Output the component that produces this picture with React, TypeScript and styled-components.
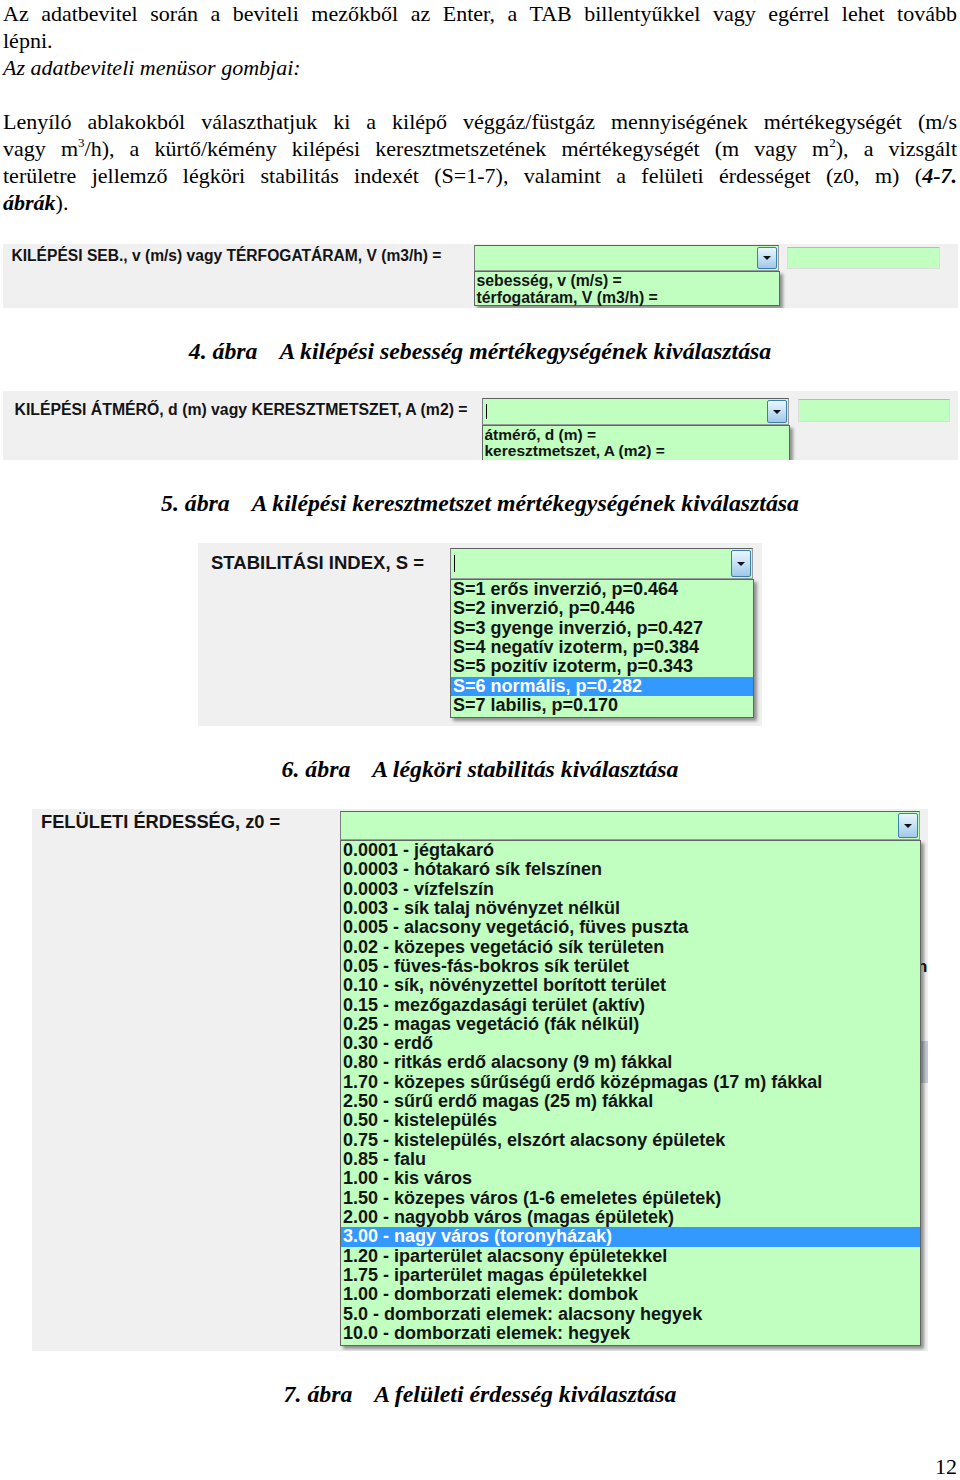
import React from "react";
import styled, { createGlobalStyle } from "styled-components";

const GREEN = "#c0ffc0";

const GlobalStyle = createGlobalStyle`
  html, body { margin: 0; padding: 0; background: #ffffff; }
  body { width: 960px; }
`;

const Page = styled.div`
  width: 960px;
  box-sizing: border-box;
  display: flex;
  flex-direction: column;
  font-family: "Liberation Serif", "Times New Roman", serif;
  color: #000;
`;

const TextBlock = styled.div`
  padding: 0 3px;
`;

const Para = styled.p<{ $italic?: boolean; $after?: number }>`
  margin: 0 0 ${(p) => p.$after ?? 0}px;
  font-size: 22px;
  line-height: 27px;
  text-align: justify;
  text-align-last: justify;
  font-style: ${(p) => (p.$italic ? "italic" : "normal")};
`;

const LastLine = styled.span`
  display: block;
  text-align: left;
  text-align-last: left;
`;

const Sup = styled.sup`
  font-size: 13px;
  line-height: 0;
  vertical-align: 9px;
`;

const Emph = styled.span`
  font-weight: 700;
  font-style: italic;
`;

const Caption = styled.div`
  margin: 30px 0 26px;
  text-align: center;
  font-family: "Liberation Serif", "Times New Roman", serif;
  font-size: 23.8px;
  line-height: 27px;
  font-weight: 700;
  font-style: italic;
  white-space: nowrap;
`;

const FigNo = styled.span`
  margin-right: 22px;
`;

const Panel = styled.div<{ $w: number; $h: number; $pad: number; $top: number }>`
  position: relative;
  align-self: center;
  flex: none;
  box-sizing: border-box;
  width: ${(p) => p.$w}px;
  height: ${(p) => p.$h}px;
  margin-top: ${(p) => p.$top}px;
  padding-left: ${(p) => p.$pad}px;
  background: #f0f0f0;
  overflow: hidden;
  display: flex;
  align-items: flex-start;
  font-family: "Liberation Sans", Arial, sans-serif;
  color: #141414;
`;

const FieldLabel = styled.div<{ $w: number; $size: number; $top: number }>`
  flex: none;
  width: ${(p) => p.$w}px;
  margin-top: ${(p) => p.$top}px;
  font-size: ${(p) => p.$size}px;
  line-height: 20px;
  font-weight: 700;
  white-space: nowrap;
`;

const ComboWrap = styled.div<{ $w: number; $top: number }>`
  position: relative;
  flex: none;
  width: ${(p) => p.$w}px;
  margin-top: ${(p) => p.$top}px;
`;

const ComboField = styled.div<{ $h: number }>`
  box-sizing: border-box;
  height: ${(p) => p.$h}px;
  display: flex;
  align-items: stretch;
  background: ${GREEN};
  border: 1px solid #9a9b9c;
  border-top-color: #5f6061;
  border-left-color: #7c7d7e;
  padding: 1px;
`;

const ComboInput = styled.div`
  flex: 1;
  display: flex;
  align-items: center;
  padding-left: 2px;
`;

const Caret = styled.span`
  width: 1px;
  height: 66%;
  background: #000;
`;

const DropButton = styled.div`
  flex: none;
  width: 20px;
  box-sizing: border-box;
  border: 1px solid #3c7fb1;
  border-radius: 2px;
  background: linear-gradient(#eaf6fd, #c4e2f7 50%, #a2c7e6);
  display: flex;
  align-items: center;
  justify-content: center;
`;

const Arrow = styled.span`
  width: 0;
  height: 0;
  border-left: 4px solid transparent;
  border-right: 4px solid transparent;
  border-top: 4px solid #111;
`;

const DropList = styled.div<{ $h?: number; $padTop: number }>`
  position: absolute;
  top: 100%;
  left: 0;
  z-index: 2;
  width: calc(100% + 1px);
  box-sizing: border-box;
  ${(p) => (p.$h ? `height: ${p.$h}px;` : "")}
  padding: ${(p) => p.$padTop}px 0 2px;
  background: ${GREEN};
  border: 1px solid #646464;
  box-shadow: 3px 3px 3px rgba(0, 0, 0, 0.4);
`;

const ListItem = styled.div<{ $size: number; $lh: number; $sel?: boolean }>`
  padding-left: 2px;
  font-size: ${(p) => p.$size}px;
  line-height: ${(p) => p.$lh}px;
  font-weight: 700;
  white-space: nowrap;
  background: ${(p) => (p.$sel ? "#3399ff" : "transparent")};
  color: ${(p) => (p.$sel ? "#ffffff" : "#141414")};
`;

const TextBox = styled.div<{ $w: number; $h: number; $top: number; $gap: number }>`
  flex: none;
  box-sizing: border-box;
  width: ${(p) => p.$w}px;
  height: ${(p) => p.$h}px;
  margin-top: ${(p) => p.$top}px;
  margin-left: ${(p) => p.$gap}px;
  background: ${GREEN};
  border: 1px solid #dcdcdc;
  border-top-color: #b8b8b8;
`;

const BehindText = styled.span<{ $x: number; $y: number }>`
  position: absolute;
  left: ${(p) => p.$x}px;
  top: ${(p) => p.$y}px;
  font-size: 17px;
  font-weight: 700;
  line-height: 20px;
  z-index: 1;
`;

const BehindBlock = styled.div<{ $x: number; $y: number; $w: number; $h: number }>`
  position: absolute;
  left: ${(p) => p.$x}px;
  top: ${(p) => p.$y}px;
  width: ${(p) => p.$w}px;
  height: ${(p) => p.$h}px;
  background: #c3c9d2;
  z-index: 1;
`;

const PageNumber = styled.div`
  margin-top: 23px;
  padding-right: 3px;
  text-align: right;
  font-size: 22px;
  line-height: 20px;
`;

type ComboProps = {
  width: number;
  top: number;
  height: number;
  caret?: boolean;
  items: string[];
  selected?: number;
  itemSize: number;
  itemLine: number;
  listHeight?: number;
  listPadTop: number;
};

function Combo({ width, top, height, caret, items, selected, itemSize, itemLine, listHeight, listPadTop }: ComboProps) {
  return (
    <ComboWrap $w={width} $top={top}>
      <ComboField $h={height}>
        <ComboInput>{caret && <Caret />}</ComboInput>
        <DropButton>
          <Arrow />
        </DropButton>
      </ComboField>
      <DropList $h={listHeight} $padTop={listPadTop}>
        {items.map((t, i) => (
          <ListItem key={i} $size={itemSize} $lh={itemLine} $sel={i === selected}>
            {t}
          </ListItem>
        ))}
      </DropList>
    </ComboWrap>
  );
}

const fig6Items = [
  "S=1 erős inverzió, p=0.464",
  "S=2 inverzió, p=0.446",
  "S=3 gyenge inverzió, p=0.427",
  "S=4 negatív izoterm, p=0.384",
  "S=5 pozitív izoterm, p=0.343",
  "S=6 normális, p=0.282",
  "S=7 labilis, p=0.170",
];

const fig7Items = [
  "0.0001 - jégtakaró",
  "0.0003 - hótakaró sík felszínen",
  "0.0003 - vízfelszín",
  "0.003 - sík talaj növényzet nélkül",
  "0.005 - alacsony vegetáció, füves puszta",
  "0.02 - közepes vegetáció sík területen",
  "0.05 - füves-fás-bokros sík terület",
  "0.10 - sík, növényzettel borított terület",
  "0.15 - mezőgazdasági terület (aktív)",
  "0.25 - magas vegetáció (fák nélkül)",
  "0.30 - erdő",
  "0.80 - ritkás erdő alacsony (9 m) fákkal",
  "1.70 - közepes sűrűségű erdő középmagas (17 m) fákkal",
  "2.50 - sűrű erdő magas (25 m) fákkal",
  "0.50 - kistelepülés",
  "0.75 - kistelepülés, elszórt alacsony épületek",
  "0.85 - falu",
  "1.00 - kis város",
  "1.50 - közepes város (1-6 emeletes épületek)",
  "2.00 - nagyobb város (magas épületek)",
  "3.00 - nagy város (toronyházak)",
  "1.20 - iparterület alacsony épületekkel",
  "1.75 - iparterület magas épületekkel",
  "1.00 - domborzati elemek: dombok",
  "5.0 - domborzati elemek: alacsony hegyek",
  "10.0 - domborzati elemek: hegyek",
];

export default function App() {
  return (
    <>
      <GlobalStyle />
      <Page>
        <TextBlock>
          <Para>
            Az adatbevitel során a beviteli mezőkből az Enter, a TAB billentyűkkel vagy egérrel lehet tovább
            <LastLine>lépni.</LastLine>
          </Para>
          <Para $italic $after={27}>
            <LastLine>Az adatbeviteli menüsor gombjai:</LastLine>
          </Para>
          <Para>
            Lenyíló ablakokból választhatjuk ki a kilépő véggáz/füstgáz mennyiségének mértékegységét (m/s
            <br />
            vagy m<Sup>3</Sup>/h), a kürtő/kémény kilépési keresztmetszetének mértékegységét (m vagy m<Sup>2</Sup>), a
            vizsgált
            <br />
            területre jellemző légköri stabilitás indexét (S=1-7), valamint a felületi érdességet (z0, m) (
            <Emph>4-7.</Emph>
            <LastLine>
              <Emph>ábrák</Emph>).
            </LastLine>
          </Para>
        </TextBlock>

        <Panel $w={955} $h={64} $pad={9} $top={28}>
          <FieldLabel $w={462} $size={15.6} $top={2}>
            KILÉPÉSI SEB., v (m/s) vagy TÉRFOGATÁRAM, V (m3/h) =
          </FieldLabel>
          <Combo
            width={305}
            top={1}
            height={26}
            items={["sebesség, v (m/s) =", "térfogatáram, V (m3/h) ="]}
            itemSize={15.8}
            itemLine={16.5}
            listHeight={35}
            listPadTop={1}
          />
          <TextBox $w={153} $h={22} $top={3} $gap={8} />
        </Panel>
        <Caption>
          <FigNo>4. ábra</FigNo>A kilépési sebesség mértékegységének kiválasztása
        </Caption>

        <Panel $w={955} $h={69} $pad={12} $top={0}>
          <FieldLabel $w={467} $size={15.8} $top={9}>
            KILÉPÉSI ÁTMÉRŐ, d (m) vagy KERESZTMETSZET, A (m2) =
          </FieldLabel>
          <Combo
            width={307}
            top={7}
            height={27}
            caret
            items={["átmérő, d (m) =", "keresztmetszet, A (m2) ="]}
            itemSize={15.5}
            itemLine={16}
            listHeight={40}
            listPadTop={1}
          />
          <TextBox $w={152} $h={23} $top={8} $gap={9} />
        </Panel>
        <Caption>
          <FigNo>5. ábra</FigNo>A kilépési keresztmetszet mértékegységének kiválasztása
        </Caption>

        <Panel $w={564} $h={183} $pad={13} $top={0}>
          <FieldLabel $w={239} $size={18.5} $top={10}>
            STABILITÁSI INDEX, S =
          </FieldLabel>
          <Combo
            width={303}
            top={5}
            height={31}
            caret
            items={fig6Items}
            selected={5}
            itemSize={18}
            itemLine={19.33}
            listPadTop={0}
          />
        </Panel>
        <Caption>
          <FigNo>6. ábra</FigNo>A légköri stabilitás kiválasztása
        </Caption>

        <Panel $w={896} $h={542} $pad={9} $top={0}>
          <FieldLabel $w={299} $size={18.3} $top={3}>
            FELÜLETI ÉRDESSÉG, z0 =
          </FieldLabel>
          <Combo
            width={580}
            top={2}
            height={29}
            items={fig7Items}
            selected={20}
            itemSize={18}
            itemLine={19.32}
            listPadTop={0}
          />
          <BehindText $x={885} $y={148}>
            n
          </BehindText>
          <BehindBlock $x={889} $y={232} $w={7} $h={42} />
        </Panel>
        <Caption>
          <FigNo>7. ábra</FigNo>A felületi érdesség kiválasztása
        </Caption>

        <PageNumber>12</PageNumber>
      </Page>
    </>
  );
}
